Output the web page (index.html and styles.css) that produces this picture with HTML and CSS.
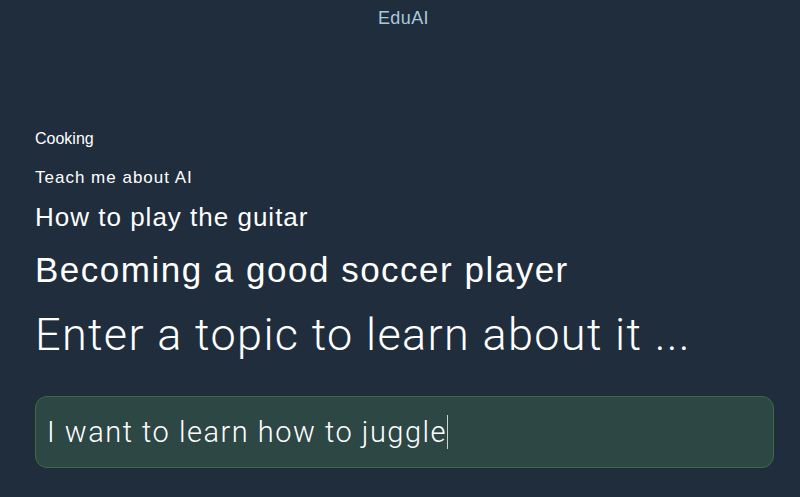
FILE: index.html
```html
<!DOCTYPE html>
<html>
<head>
<meta charset="utf-8">
<link rel="stylesheet" href="styles.css">
</head>
<body>
<header class="top">EduAI</header>
<main class="main">
  <ul class="history">
    <li class="h1">Cooking</li>
    <li class="h2">Teach me about AI</li>
    <li class="h3">How to play the guitar</li>
    <li class="h4">Becoming a good soccer player</li>
  </ul>
  <h1 class="prompt">Enter a topic to learn about it ...</h1>
  <div class="input"><span class="typed">I want to learn how to juggle</span><span class="caret"></span></div>
</main>
</body>
</html>
```

FILE: styles.css
```css
html, body {
  margin: 0;
  padding: 0;
  background: #1f2d3d;
  height: 100%;
  overflow: hidden;
}
body {
  font-family: "Liberation Sans", Arial, sans-serif;
  color: #ffffff;
}
.top {
  text-align: center;
  color: #a8c8dc;
  font-size: 18px;
  line-height: 18px;
  letter-spacing: 0.4px;
  padding-top: 9px;
  padding-left: 7px;
}
.main {
  padding: 0 26px 0 35px;
}
.history {
  list-style: none;
  margin: 104px 0 0 0;
  padding: 0;
  display: flex;
  flex-direction: column;
}
.history li {
  line-height: 1;
}
.h1 { font-size: 16px; }
.h2 { font-size: 17px; letter-spacing: 1px; margin-top: 22px; }
.h3 { font-size: 26px; letter-spacing: 1px; margin-top: 18px; }
.h4 { font-size: 35px; letter-spacing: 1.5px; margin-top: 22px; }
.prompt {
  margin: 25px 0 0 0;
  font-weight: 300;
  font-family: "Roboto", "Liberation Sans", sans-serif;
  font-size: 45px;
  line-height: 1;
  letter-spacing: 1.35px;
}
.input {
  display: flex;
  align-items: center;
  margin-top: 39px;
  height: 72px;
  border: 1.5px solid #3d6b40;
  border-radius: 12px;
  background: #2d4745;
  padding-left: 11px;
  box-sizing: border-box;
}
.typed {
  font-family: "Roboto", "Liberation Sans", sans-serif;
  font-weight: 300;
  font-size: 29px;
  line-height: 1;
  letter-spacing: 1.5px;
}
.caret {
  display: inline-block;
  width: 1px;
  height: 34px;
  background: #c8d4d4;
  margin-left: 0;
}
```
